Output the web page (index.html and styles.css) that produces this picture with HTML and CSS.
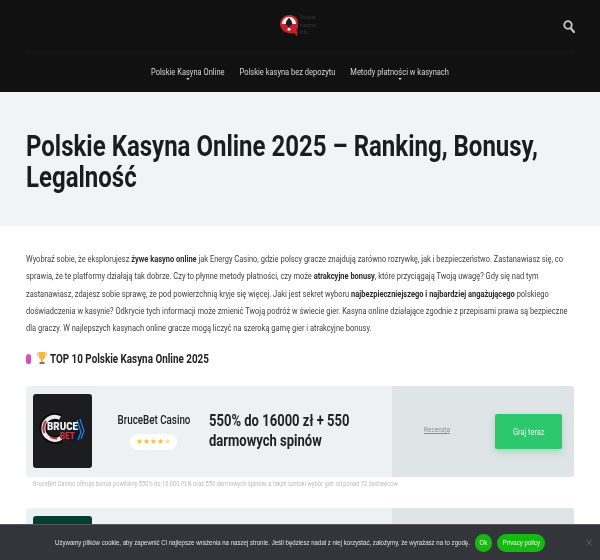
FILE: index.html
```html
<!DOCTYPE html>
<html lang="pl">
<head>
<meta charset="utf-8">
<title>Polskie Kasyna Online 2025</title>
<link rel="stylesheet" href="styles.css">
</head>
<body>
<header class="site-header">
  <div class="top-row">
    <div class="logo">
      <svg class="logo-mark" width="18" height="22" viewBox="0 0 18 22">
        <path d="M9 0a9 9 0 0 0 0 18h5l3.500 3.500-.8-7A9 9 0 0 0 9 0z" fill="#c5202c"/>
        <path d="M1.800 9a7.200 7.200 0 0 1 14.400 0z" fill="#f4f0f0"/>
        <path d="M9 2.800c1.800 2.200 3.200 3.600 3.200 5.600 0 1.500-1.300 2.300-2.500 1.900l.6 1.700H7.700l.6-1.700c-1.200.4-2.500-.4-2.500-1.900 0-2 1.400-3.400 3.200-5.600z" fill="#1b1b1b"/>
        <circle cx="9" cy="14.200" r="1.500" fill="#f4f0f0"/>
      </svg>
      <div class="logo-text"><span>Polskie</span><span>Kasyna</span><span>Info</span></div>
    </div>
    <svg class="search" width="12" height="13" viewBox="0 0 12 13">
      <circle cx="5" cy="5" r="3.800" fill="none" stroke="#c4c4c4" stroke-width="1.800"/>
      <path d="M7.800 8.200l3.200 3.800" stroke="#c4c4c4" stroke-width="2.200" stroke-linecap="round"/>
    </svg>
  </div>
  <nav class="main-nav">
    <a class="nav-item has-sub">Polskie Kasyna Online</a>
    <a class="nav-item">Polskie kasyna bez depozytu</a>
    <a class="nav-item has-sub">Metody płatności w kasynach</a>
  </nav>
</header>
<section class="hero">
  <h1 class="narrow">Polskie Kasyna Online 2025 – Ranking, Bonusy, Legalność</h1>
</section>
<main class="content">
  <p class="intro narrow">Wyobraź sobie, że eksplorujesz <b>żywe kasyno online</b> jak Energy Casino, gdzie polscy gracze znajdują zarówno rozrywkę, jak i bezpieczeństwo. Zastanawiasz się, co sprawia, że te platformy działają tak dobrze. Czy to płynne metody płatności, czy może <b>atrakcyjne bonusy</b>, które przyciągają Twoją uwagę? Gdy się nad tym zastanawiasz, zdajesz sobie sprawę, że pod powierzchnią kryje się więcej. Jaki jest sekret wyboru <b>najbezpieczniejszego i najbardziej angażującego</b> polskiego doświadczenia w kasynie? Odkrycie tych informacji może zmienić Twoją podróż w świecie gier. Kasyna online działające zgodnie z przepisami prawa są bezpieczne dla graczy. W najlepszych kasynach online gracze mogą liczyć na szeroką gamę gier i atrakcyjne bonusy.</p>
  <h2 class="top-title">
    <svg class="emoji-pin" width="5" height="10" viewBox="0 0 5 10">
      <defs><linearGradient id="g" x1="0" y1="0" x2="0" y2="1"><stop offset="0" stop-color="#f0568e"/><stop offset="1" stop-color="#b04fe4"/></linearGradient></defs>
      <rect width="5" height="10" rx="2.500" fill="url(#g)"/>
    </svg>
    <svg class="emoji-cup" width="10" height="12" viewBox="0 0 10 12">
      <path d="M2 0h6v4.500a3 3 0 0 1-6 0z" fill="#f3bb45"/>
      <path d="M2 1H.5c0 2 .6 3.500 2 4M8 1h1.500c0 2-.6 3.500-2 4" fill="none" stroke="#e8a838" stroke-width=".9"/>
      <rect x="4.300" y="7" width="1.400" height="3" fill="#d99a2b"/>
      <rect x="2.500" y="10" width="5" height="2" fill="#a5653a"/>
    </svg>
    <span class="narrow-inline">TOP 10 Polskie Kasyna Online 2025</span>
  </h2>
  <article class="card">
    <div class="card-main">
      <div class="card-logo">
        <svg width="59" height="74" viewBox="0 0 59 74">
          <path d="M42 24l8 3 2 9-3 10-9 2-8-3z" fill="#0c1a2c"/>
          <path d="M47 25l4 12-3 8M44 26l4 12-3 8" fill="none" stroke="#2f7fd0" stroke-width="1.300"/>
          <path d="M27 24a11.500 11.500 0 1 0 1 20" fill="none" stroke="#0b0b0d" stroke-width="8"/>
          <path d="M27 24a11.500 11.500 0 1 0 1 20" fill="none" stroke="#ecebee" stroke-width="4"/>
          <path d="M13 27a11.500 11.500 0 0 0-1.500 12M24 44.500a11.500 11.500 0 0 1-7-2" fill="none" stroke="#b8323a" stroke-width="2"/>
          <text class="logo-bruce" x="14" y="36" textLength="31" lengthAdjust="spacingAndGlyphs">BRUCE</text>
          <text class="logo-bet" x="27" y="45" textLength="15" lengthAdjust="spacingAndGlyphs">BET</text>
        </svg>
      </div>
      <div class="card-name">
        <div class="name">BruceBet Casino</div>
        <div class="stars">★★★★<span class="star-half">★</span></div>
      </div>
      <div class="bonus narrow">550% do 16000 zł + 550 darmowych spinów</div>
    </div>
    <div class="card-side">
      <a class="review">Recenzja</a>
      <a class="play"><span class="play-label">Graj teraz</span></a>
    </div>
  </article>
  <p class="note narrow">BruceBet Casino oferuje bonus powitalny 550% do 16 000 PLN oraz 550 darmowych spinów, a także szeroki wybór gier od ponad 72 dostawców.</p>
  <article class="card">
    <div class="card-main">
      <div class="card-logo card-logo-green"></div>
    </div>
    <div class="card-side"></div>
  </article>
</main>
<div class="cookie">
  <span class="cookie-text">Używamy plików cookie, aby zapewnić Ci najlepsze wrażenia na naszej stronie. Jeśli będziesz nadal z niej korzystać, założymy, że wyrażasz na to zgodę.</span>
  <a class="cookie-btn btn-ok"><span class="btn-label">Ok</span></a>
  <a class="cookie-btn btn-policy"><span class="btn-label">Privacy policy</span></a>
  <svg class="cookie-close" width="6" height="7" viewBox="0 0 6 7"><path d="M.5.500l5 6M5.500.500l-5 6" stroke="#5c5f66" stroke-width="1"/></svg>
</div>
</body>
</html>
```
FILE: styles.css
```css
* { box-sizing: border-box; }
html, body { margin: 0; padding: 0; }
body {
  width: 600px;
  height: 560px;
  overflow: hidden;
  background: #fff;
  font-family: Roboto, "Liberation Sans", sans-serif;
  color: #333;
  position: relative;
  filter: blur(.2px);
}
/* The reference uses a condensed face; Roboto narrowed horizontally stands in. */
.narrow { transform: scaleX(.8); transform-origin: left top; }
.narrow-inline { display: inline-block; transform: scaleX(.8); transform-origin: left center; white-space: nowrap; }

.site-header { background: #111112; height: 92px; padding: 0 26px; }
.top-row {
  height: 53px;
  border-bottom: 1px solid #1a1a1b;
  display: flex;
  justify-content: center;
  align-items: center;
  position: relative;
}
.logo { display: flex; align-items: center; gap: 2px; margin-bottom: 1px; }
.logo-text { display: flex; flex-direction: column; font-size: 5px; line-height: 7.500px; color: #333; width: 21px; }
.search { position: absolute; right: -1px; top: 20px; }
.main-nav {
  display: flex;
  justify-content: center;
  gap: 18.750px;
  padding-top: 12px;
  transform: scaleX(.8);
}
.nav-item {
  font-size: 9.400px;
  line-height: 14px;
  color: #d8d8d8;
  position: relative;
  white-space: nowrap;
}
.has-sub::after {
  content: "";
  position: absolute;
  left: 50%;
  top: 13px;
  margin-left: -2px;
  border: 2px solid transparent;
  border-top: 2px solid #e4e4e4;
  border-bottom: 0;
}
.hero { background: #f1f3f5; height: 134px; padding: 38px 26px 0; }
h1 {
  margin: 0;
  width: 685px;
  font-size: 30px;
  line-height: 31px;
  font-weight: 700;
  color: #1c1c1c;
}
.content { padding: 24px 26px 0; }
.intro {
  margin: 0;
  width: 685px;
  font-size: 9.350px;
  line-height: 17.300px;
  color: #3c3c3c;
}
.intro b { font-weight: 700; color: #2a2a2a; }
.top-title {
  margin: 12.500px 0 0;
  height: 20px;
  display: flex;
  align-items: center;
  font-size: 12.340px;
  font-weight: 700;
  color: #222;
}
.emoji-pin { flex: none; margin-right: 6px; }
.emoji-cup { flex: none; margin-right: 3px; margin-top: -2px; }
.card {
  margin-top: 17px;
  height: 91px;
  display: flex;
  border-radius: 3px;
  overflow: hidden;
  background: #eef1f3;
}
.card-main { width: 366px; flex: none; display: flex; align-items: center; padding-left: 7px; }
.card-side {
  flex: 1;
  background: #dfe4e6;
  display: flex;
  align-items: center;
  justify-content: space-between;
  padding: 0 12px 0 32px;
}
.card-logo {
  width: 59px;
  height: 74px;
  flex: none;
  background: #1d1d1f;
  border-radius: 3px;
}
.card-logo svg { display: block; }
.card-logo-green { background: #063d32; align-self: flex-start; margin-top: 8px; }
.logo-bruce { font: 900 11px Roboto, sans-serif; fill: #f4f4f4; }
.logo-bet { font: 900 9px Roboto, sans-serif; fill: #c8343c; }
.card-name { width: 100px; margin-left: 11.500px; text-align: center; flex: none; }
.name {
  font-size: 12.250px;
  font-weight: 500;
  color: #222;
  line-height: 14px;
  transform: scaleX(.8);
  white-space: nowrap;
}
.stars {
  display: inline-block;
  margin-top: 7px;
  width: 47px;
  height: 16px;
  background: #fff;
  border-radius: 8px;
  font-size: 8px;
  line-height: 16px;
  color: #edc437;
}
.star-half { color: #efe0a8; }
.bonus {
  margin-left: 5.500px;
  width: 206px;
  flex: none;
  font-size: 16.300px;
  line-height: 20.500px;
  font-weight: 700;
  color: #222;
  transform-origin: left center;
}
.review {
  width: 30px;
  font-size: 8.060px;
  color: #8a9094;
  text-decoration: underline;
  white-space: nowrap;
  transform: scaleX(.8);
  transform-origin: left center;
  margin-top: -3px;
}
.play {
  width: 67px;
  height: 35px;
  background: #2dc76d;
  color: #e6f6ec;
  border-radius: 2px;
  font-size: 9.300px;
  display: flex;
  align-items: center;
  justify-content: center;
  box-shadow: 0 3px 6px rgba(45, 199, 109, .35);
}
.play-label { transform: scaleX(.8); white-space: nowrap; }
.note {
  margin: 2px 0 0;
  padding-left: 8.750px;
  font-size: 7.170px;
  line-height: 10px;
  color: #b8bcc0;
  white-space: nowrap;
}
.note + .card { margin-top: 19px; }
.cookie {
  position: absolute;
  left: 0;
  right: 0;
  bottom: 0;
  height: 36px;
  background: #33353b;
  border-top: 1px solid #55575c;
  display: flex;
  align-items: center;
  padding-left: 55px;
  font-family: "Liberation Sans", sans-serif;
  color: #e4e4e6;
  font-size: 7px;
}
.cookie-text {
  width: 415px;
  flex: none;
  white-space: nowrap;
  transform: scaleX(.87);
  transform-origin: left center;
}
.cookie-btn {
  margin-left: 5px;
  height: 18px;
  border-radius: 9px;
  background: #16b90f;
  color: #eafbe6;
  line-height: 18px;
  display: flex;
  justify-content: center;
  flex: none;
}
.btn-ok { width: 17px; }
.btn-policy { width: 48px; }
.btn-label { transform: scaleX(.87); white-space: nowrap; }
.cookie-close { position: absolute; right: 8px; top: 14px; }
```
